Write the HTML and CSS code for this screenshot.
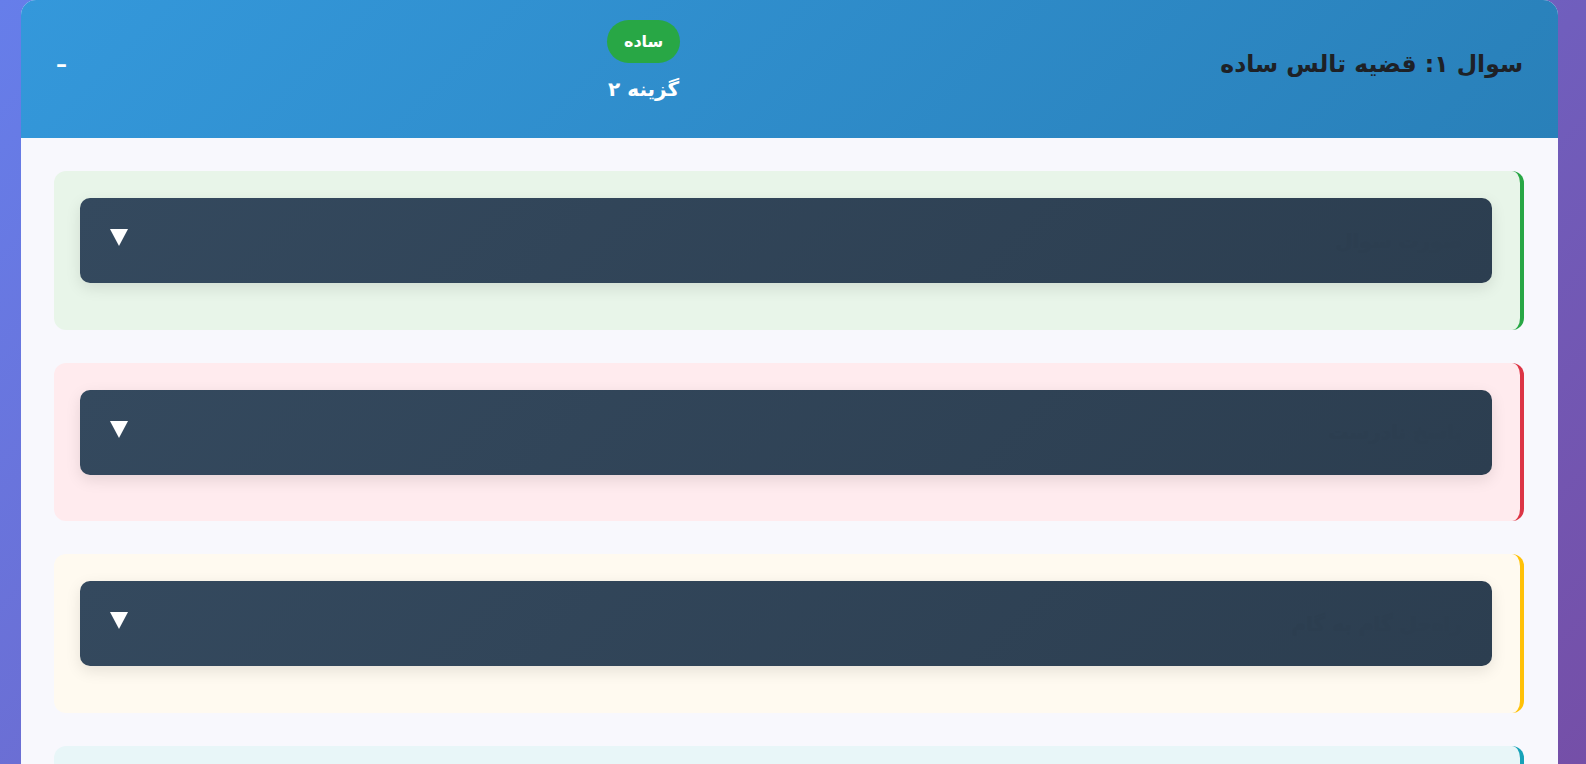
FILE: index.html
```html
<!DOCTYPE html>
<html lang="fa" dir="rtl">
<head>
<meta charset="utf-8">
<title>سوال ۱</title>
<link rel="stylesheet" href="styles.css">
</head>
<body>
<div class="page">
  <div class="question">
    <header class="q-header">
      <h2 class="q-title">سوال ۱: قضیه تالس ساده</h2>
      <div class="q-meta">
        <span class="badge">ساده</span>
        <span class="answer">گزینه ۲</span>
      </div>
      <button class="toggle">–</button>
    </header>
    <div class="q-body">
      <section class="card card-green">
        <div class="bar"><span class="bar-title">صورت سوال</span><svg class="arrow" width="18" height="17" viewBox="0 0 18 17"><polygon points="0,0 18,0 9,17" fill="#fff"/></svg></div>
      </section>
      <section class="card card-red">
        <div class="bar"><span class="bar-title">پاسخ نادرست</span><svg class="arrow" width="18" height="17" viewBox="0 0 18 17"><polygon points="0,0 18,0 9,17" fill="#fff"/></svg></div>
      </section>
      <section class="card card-yellow">
        <div class="bar"><span class="bar-title">راه‌حل گام به گام</span><svg class="arrow" width="18" height="17" viewBox="0 0 18 17"><polygon points="0,0 18,0 9,17" fill="#fff"/></svg></div>
      </section>
      <section class="card card-teal">
        <div class="bar"><span class="bar-title">نکته</span><svg class="arrow" width="18" height="17" viewBox="0 0 18 17"><polygon points="0,0 18,0 9,17" fill="#fff"/></svg></div>
      </section>
    </div>
  </div>
</div>
</body>
</html>
```
FILE: styles.css
```css
html, body {
  margin: 0;
  padding: 0;
}
body {
  background: linear-gradient(135deg, #667eea 0%, #764ba2 100%);
  min-height: 100vh;
  font-family: "DejaVu Sans", "Noto Sans", sans-serif;
  overflow: hidden;
}
.page {
  padding: 0 28px 0 21px;
}
.question {
  background: #f8f8fd;
  border-radius: 15px;
  overflow: hidden;
}
.q-header {
  height: 138px;
  box-sizing: border-box;
  padding: 0 35px;
  background: linear-gradient(135deg, #3498db 0%, #2980b9 100%);
  display: flex;
  justify-content: space-between;
  align-items: center;
}
.q-title {
  margin: 0 0 10px 0;
  font-size: 23.5px;
  font-weight: bold;
  color: #1e2126;
}
.q-meta {
  display: flex;
  flex-direction: column;
  align-items: center;
  gap: 13px;
  margin-bottom: 16px;
}
.badge {
  background: #28a745;
  color: #fff;
  font-size: 16px;
  font-weight: bold;
  line-height: 27px;
  padding: 8px 17px;
  border-radius: 22px;
}
.answer {
  color: #fff;
  font-size: 20px;
  font-weight: bold;
  line-height: 26px;
}
.toggle {
  background: none;
  border: none;
  color: #fff;
  font-family: "DejaVu Sans", sans-serif;
  font-size: 22px;
  font-weight: bold;
  line-height: 26px;
  padding: 0;
  margin-bottom: 8px;
  cursor: pointer;
}
.q-body {
  padding: 33px 34px 20px 33px;
}
.card {
  padding: 27px 28px 46.5px 26px;
  border-radius: 12px;
  border-right: 4px solid;
  margin-bottom: 33px;
}
.card-green { background: #e8f5e9; border-right-color: #28a745; }
.card-red { background: #ffebee; border-right-color: #dc3545; }
.card-yellow { background: #fffaf0; border-right-color: #ffc107; }
.card-teal { background: #e8f6f8; border-right-color: #17a2b8; }
.bar {
  height: 85px;
  box-sizing: border-box;
  padding: 0 30px;
  border-radius: 10px;
  background: linear-gradient(135deg, #34495e 0%, #2c3e50 100%);
  box-shadow: 0 5px 15px rgba(0, 0, 0, 0.1);
  display: flex;
  justify-content: space-between;
  align-items: center;
}
.bar-title {
  color: #2c3e50;
  font-size: 20px;
  font-weight: 600;
}
.arrow {
  margin-bottom: 6px;
}
```
